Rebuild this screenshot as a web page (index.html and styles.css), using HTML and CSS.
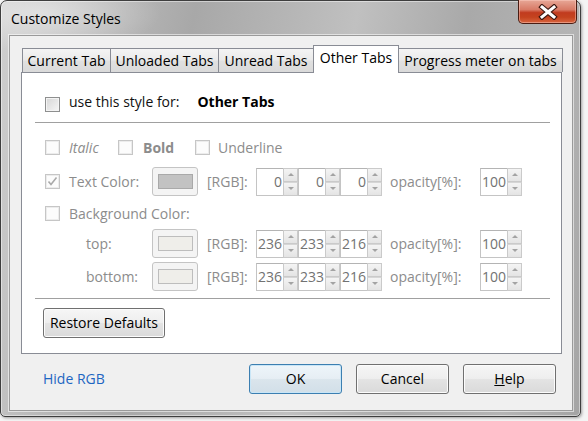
FILE: index.html
```html
<!DOCTYPE html>
<html>
<head>
<meta charset="utf-8">
<title>Customize Styles</title>
<link rel="stylesheet" href="styles.css">
</head>
<body>
<div class="window">
  <div class="titlebar">
    <span class="title">Customize Styles</span>
    <div class="close">
      <svg width="20" height="16" viewBox="0 0 20 16">
        <path d="M4 3 L16 13 M16 3 L4 13" stroke="#3b1710" stroke-width="5.2" stroke-linecap="square" fill="none"/>
        <path d="M4 3 L16 13 M16 3 L4 13" stroke="#ffffff" stroke-width="3" stroke-linecap="square" fill="none"/>
      </svg>
    </div>
  </div>
  <div class="client">
    <div class="tabs">
      <div class="tab t1">Current Tab</div>
      <div class="tab t2">Unloaded Tabs</div>
      <div class="tab t3">Unread Tabs</div>
      <div class="tab t4 selected">Other Tabs</div>
      <div class="tab t5">Progress meter on tabs</div>
    </div>
    <div class="panel">
      <div class="row row-use">
        <span class="cb enabled"></span>
        <span class="lbl dark">use this style for:</span>
        <span class="target">Other Tabs</span>
      </div>
      <div class="sep sep1"></div>
      <div class="row row-style">
        <div class="grp g1"><span class="cb"></span><span class="lbl italic">Italic</span></div>
        <div class="grp g2"><span class="cb"></span><span class="lbl bold">Bold</span></div>
        <div class="grp g3"><span class="cb"></span><span class="lbl">Underline</span></div>
      </div>
      <div class="ctl-row row-text">
        <div class="head"><span class="cb checked"><svg width="13" height="13" viewBox="0 0 13 13"><path d="M2.5 6.5 L5 9.5 L10.5 2.5" stroke="#a9a9a9" stroke-width="1.6" fill="none"/></svg></span><span class="lbl">Text Color:</span></div>
        <div class="swatch-btn"><span class="swatch gray"></span></div>
        <span class="lbl">[RGB]:</span>
        <div class="spins">
          <div class="spin"><span class="inp">0</span><span class="spn"><i class="up"></i><i class="dn"></i></span></div>
          <div class="spin"><span class="inp">0</span><span class="spn"><i class="up"></i><i class="dn"></i></span></div>
          <div class="spin"><span class="inp">0</span><span class="spn"><i class="up"></i><i class="dn"></i></span></div>
        </div>
        <span class="lbl op">opacity[%]:</span>
        <div class="spin"><span class="inp">100</span><span class="spn"><i class="up"></i><i class="dn"></i></span></div>
      </div>
      <div class="row row-bg">
        <span class="cb"></span><span class="lbl gap">Background Color:</span>
      </div>
      <div class="ctl-row row-top">
        <div class="head"><span class="lbl sub">top:</span></div>
        <div class="swatch-btn"><span class="swatch light"></span></div>
        <span class="lbl">[RGB]:</span>
        <div class="spins">
          <div class="spin"><span class="inp">236</span><span class="spn"><i class="up"></i><i class="dn"></i></span></div>
          <div class="spin"><span class="inp">233</span><span class="spn"><i class="up"></i><i class="dn"></i></span></div>
          <div class="spin"><span class="inp">216</span><span class="spn"><i class="up"></i><i class="dn"></i></span></div>
        </div>
        <span class="lbl op">opacity[%]:</span>
        <div class="spin"><span class="inp">100</span><span class="spn"><i class="up"></i><i class="dn"></i></span></div>
      </div>
      <div class="ctl-row row-bottom">
        <div class="head"><span class="lbl sub">bottom:</span></div>
        <div class="swatch-btn"><span class="swatch light"></span></div>
        <span class="lbl">[RGB]:</span>
        <div class="spins">
          <div class="spin"><span class="inp">236</span><span class="spn"><i class="up"></i><i class="dn"></i></span></div>
          <div class="spin"><span class="inp">233</span><span class="spn"><i class="up"></i><i class="dn"></i></span></div>
          <div class="spin"><span class="inp">216</span><span class="spn"><i class="up"></i><i class="dn"></i></span></div>
        </div>
        <span class="lbl op">opacity[%]:</span>
        <div class="spin"><span class="inp">100</span><span class="spn"><i class="up"></i><i class="dn"></i></span></div>
      </div>
      <div class="sep sep2"></div>
      <div class="restore-wrap">
        <div class="btn restore">Restore Defaults</div>
      </div>
    </div>
    <div class="footer">
      <span class="link">Hide RGB</span>
      <div class="btns">
        <div class="btn default">OK</div>
        <div class="btn">Cancel</div>
        <div class="btn"><span class="u">H</span>elp</div>
      </div>
    </div>
  </div>
</div>
</body>
</html>
```

FILE: styles.css
```css
* { box-sizing: border-box; }
html, body { margin: 0; padding: 0; }
body {
  width: 588px;
  height: 421px;
  overflow: hidden;
  background: #f4f4f4;
  font-family: "Open Sans", "Noto Sans", sans-serif;
  font-size: 14px;
  color: #000;
}

.window {
  width: 581px;
  height: 417px;
  border: 1px solid #3e3e3e;
  border-radius: 7px 7px 5px 5px;
  background:
    radial-gradient(ellipse 120px 40px at 40px 12px, rgba(255,255,255,0.45), rgba(255,255,255,0) 100%),
    linear-gradient(100deg, #cfcfcf 0%, #bdbdbd 14%, #a8a8a8 30%, #b6b6b6 45%, #c0c0c0 55%, #a9a9a9 72%, #b4b4b4 88%, #a4a4a4 100%);
  box-shadow: inset 0 0 0 1px rgba(255,255,255,0.45), 1px 1px 3px rgba(0,0,0,0.35);
  display: flex;
  flex-direction: column;
}

.titlebar {
  height: 34px;
  flex: none;
  display: flex;
  align-items: flex-start;
}
.title {
  padding: 8px 0 0 10px;
  line-height: 20px;
  font-size: 14px;
  color: #000;
}
.close {
  margin: -1px 3px 0 auto;
  width: 59px;
  height: 24px;
  border: 1px solid #4a1c12;
  border-top: none;
  border-radius: 0 0 5px 5px;
  background: linear-gradient(#e7a797 0%, #d87a66 42%, #c13b1f 55%, #c4431f 75%, #d8653f 100%);
  box-shadow: inset 0 0 0 1px rgba(255,210,200,0.45);
  display: flex;
  align-items: center;
  justify-content: center;
}

.client {
  margin: 0 7px 0 8px;
  height: 376px;
  flex: none;
  border: 1px solid #9a9a9a;
  background: #f0f0f0;
  box-shadow: 0 0 0 1px rgba(255,255,255,0.55);
  padding: 9px 10px 16px 11px;
  display: flex;
  flex-direction: column;
}

.tabs {
  display: flex;
  align-items: flex-end;
  height: 27px;
  padding-left: 1px;
  flex: none;
}
.tab {
  height: 24px;
  border: 1px solid #898c95;
  border-bottom: none;
  margin-right: -1px;
  line-height: 23px;
  text-align: center;
  white-space: nowrap;
  background: linear-gradient(#f4f4f4 0%, #eaeaea 48%, #e0e0e0 52%, #dadada 100%);
  color: #000;
}
.t1 { width: 89px; }
.t2 { width: 109px; }
.t3 { width: 96px; }
.t4 { width: 86px; }
.t5 { width: 165px; }
.tab.selected {
  height: 28px;
  margin-bottom: -1px;
  background: #fff;
  position: relative;
  z-index: 1;
}

.panel {
  height: 282px;
  flex: none;
  border: 1px solid #898c95;
  background: #fff;
  display: flex;
  flex-direction: column;
}

.row {
  display: flex;
  align-items: center;
  padding-left: 23px;
  flex: none;
}
.row-use { margin-top: 24px; height: 15px; }
.row-style { margin-top: 17px; height: 15px; }
.row-bg { margin-top: 11px; height: 15px; }

.sep {
  height: 1px;
  background: #a0a0a0;
  margin: 0 11px 0 13px;
  flex: none;
}
.sep1 { margin-top: 10px; }
.sep2 { margin-top: 8px; }

.cb {
  width: 15px;
  height: 15px;
  flex: none;
  border: 1px solid #c6c6c6;
  background: #fcfcfc;
  box-shadow: inset 0 0 0 1px #ececec;
  display: flex;
  align-items: center;
  justify-content: center;
}
.cb.enabled {
  border-color: #8e8f8f;
  background: linear-gradient(135deg, #d6d6d6, #f6f6f6);
  box-shadow: inset 0 0 0 1px #f4f4f4;
}

.lbl {
  line-height: 15px;
  color: #8c8c8c;
  white-space: nowrap;
}
.lbl.dark {
  color: #111;
  margin-left: 9px;
  padding-bottom: 7px;
}
.target {
  font-weight: bold;
  color: #000;
  margin-left: 18px;
  line-height: 15px;
  padding-bottom: 7px;
}

.grp { display: flex; align-items: center; }
.grp .lbl { margin-left: 9px; }
.g1 { width: 73px; }
.g2 { width: 77px; }
.g2 .lbl { margin-left: 10px; }
.g3 .lbl { margin-left: 8px; }
.italic { font-style: italic; }
.bold { font-weight: bold; }
.gap { margin-left: 9px; }

.ctl-row {
  display: grid;
  grid-template-columns: 107px 55px 49px 126px 98px 42px;
  align-items: center;
  padding-left: 23px;
  height: 28px;
  flex: none;
}
.row-text { margin-top: 12px; }
.row-top { margin-top: 8px; }
.row-bottom { margin-top: 5px; }

.head { display: flex; align-items: center; }
.head .cb + .lbl { margin-left: 9px; }
.lbl.sub { padding-left: 41px; }
.lbl.op { padding-left: 8px; }

.swatch-btn {
  width: 46px;
  height: 29px;
  border: 1px solid #c4c4c4;
  border-radius: 3px;
  background: #f4f4f4;
  display: flex;
  align-items: center;
  justify-content: center;
}
.swatch {
  width: 35px;
  height: 15px;
  border: 1px solid #a9a9a9;
}
.swatch.gray { background: #c2c2c2; }
.swatch.light { background: #efeeea; border-color: #bdbdbd; }

.spins { display: flex; }
.spin { display: flex; width: 42px; height: 28px; }
.inp {
  width: 28px;
  height: 28px;
  border: 1px solid #c4c4c4;
  border-top-color: #b4b4b4;
  background: #fff;
  text-align: right;
  padding-right: 1px;
  line-height: 26px;
  color: #727272;
}
.spn {
  width: 15px;
  margin-left: -1px;
  height: 28px;
  display: flex;
  flex-direction: column;
}
.spn i {
  flex: 1;
  border: 1px solid #cacaca;
  background: linear-gradient(#f4f4f4, #e4e4e4);
  display: flex;
  align-items: center;
  justify-content: center;
}
.spn i.dn { border-top-color: #d6d6d6; }
.spn i::after {
  content: "";
  width: 0;
  height: 0;
  border-left: 3px solid transparent;
  border-right: 3px solid transparent;
}
.spn i.up::after { border-bottom: 3px solid #a3a3a3; }
.spn i.dn::after { border-top: 3px solid #a3a3a3; }

.restore-wrap {
  margin-top: 9px;
  padding-left: 21px;
  flex: none;
}

.btn {
  width: 93px;
  height: 30px;
  border: 1px solid #707070;
  border-radius: 3px;
  background: linear-gradient(#f6f6f6 0%, #eeeeee 48%, #e3e3e3 52%, #dadada 100%);
  box-shadow: inset 0 0 0 1px #fcfcfc;
  text-align: center;
  line-height: 28px;
  color: #000;
  white-space: nowrap;
}
.btn.restore { width: 122px; }
.btn.default {
  border-color: #3c7fb1;
  background: linear-gradient(#eef5fa 0%, #e6eef4 48%, #dae5ec 52%, #d2dfe8 100%);
  box-shadow: inset 0 0 0 1px #c9e6f7;
}
.u { text-decoration: underline; }

.footer {
  display: flex;
  align-items: center;
  margin-top: 10px;
  height: 30px;
  padding-right: 6px;
  flex: none;
}
.link {
  margin-left: 22px;
  color: #1e66c2;
  line-height: 20px;
}
.btns {
  margin-left: auto;
  display: flex;
  gap: 14px;
}
```
